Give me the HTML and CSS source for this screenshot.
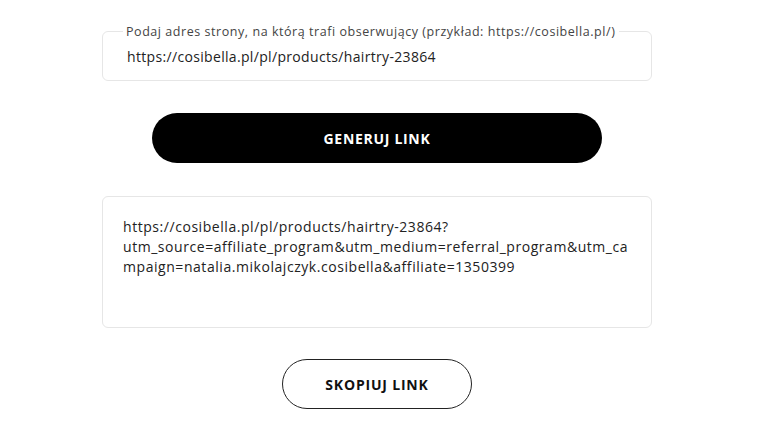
FILE: index.html
```html
<!DOCTYPE html>
<html lang="pl">
<head>
<meta charset="utf-8">
<link rel="stylesheet" href="styles.css">
</head>
<body>
<main class="page">
  <fieldset class="field">
    <legend class="field-label">Podaj adres strony, na którą trafi obserwujący (przykład: https://cosibella.pl/)</legend>
    <div class="field-value">https://cosibella.pl/pl/products/hairtry-23864</div>
  </fieldset>
  <button class="btn btn-primary">GENERUJ LINK</button>
  <div class="output">https://cosibella.pl/pl/products/hairtry-23864?<br>utm_source=affiliate_program&amp;utm_medium=referral_program&amp;utm_ca<br>mpaign=natalia.mikolajczyk.cosibella&amp;affiliate=1350399</div>
  <button class="btn btn-outline">SKOPIUJ LINK</button>
</main>
</body>
</html>
```
FILE: styles.css
```css
html, body {
  margin: 0;
  padding: 0;
  background: #fff;
}
body {
  font-family: "Open Sans", "Liberation Sans", sans-serif;
  color: #222;
}
.page {
  width: 550px;
  margin-left: 102px;
  padding-top: 24px;
  display: flex;
  flex-direction: column;
  align-items: center;
}
.field {
  box-sizing: border-box;
  width: 550px;
  height: 57px;
  margin: 0;
  padding: 0 20px 0 24px;
  border: 1px solid #e6e6e6;
  border-radius: 6px;
}
.field-label {
  font-size: 12.5px;
  color: #444;
  padding: 0 4px 0 3px;
  margin-left: -4px;
  line-height: 15px;
  letter-spacing: 0.55px;
}
.field-value {
  font-size: 14px;
  color: #222;
  line-height: 18px;
  margin-top: 9px;
  letter-spacing: 0.33px;
}
.btn {
  font-family: "Open Sans", "Liberation Sans", sans-serif;
  font-weight: 700;
  font-size: 14px;
  border-radius: 25px;
  cursor: pointer;
  box-sizing: border-box;
  height: 50px;
  padding: 0;
}
.btn-primary {
  margin-top: 32px;
  width: 450px;
  background: #000;
  color: #fff;
  border: none;
  letter-spacing: 0.7px;
}
.btn-outline {
  margin-top: 31px;
  width: 190px;
  background: #fff;
  color: #111;
  border: 1px solid #222;
  letter-spacing: 0.8px;
}
.output {
  box-sizing: border-box;
  width: 550px;
  height: 132px;
  margin-top: 33px;
  padding: 20px 20px 0 20px;
  border: 1px solid #e6e6e6;
  border-radius: 6px;
  font-size: 14px;
  line-height: 20px;
  letter-spacing: 0.55px;
  color: #222;
}
```
